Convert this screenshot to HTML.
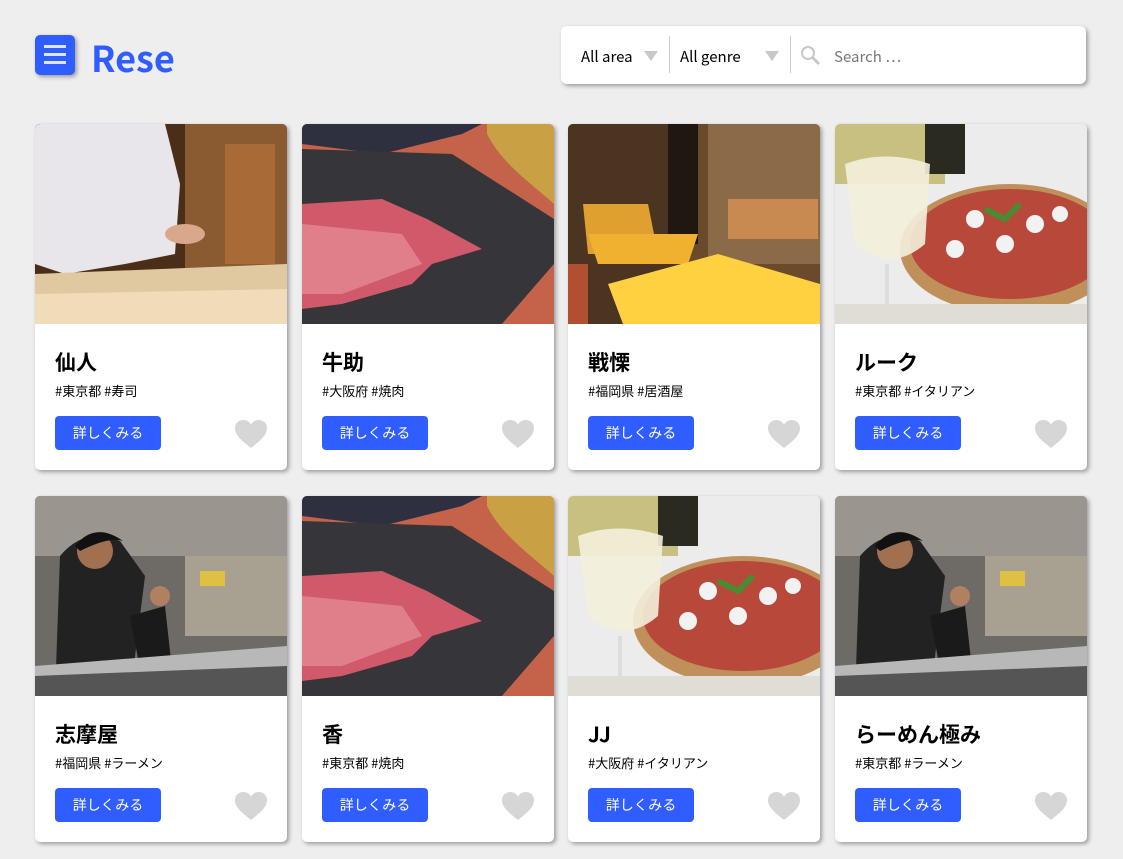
<!DOCTYPE html>
<html><head><meta charset="utf-8"><style>
*{margin:0;padding:0;box-sizing:border-box}
html,body{width:1123px;height:859px;overflow:hidden}
body{background:#eeeeee;font-family:"Liberation Sans","Noto Sans CJK JP",sans-serif;position:relative}
.menu{position:absolute;left:35px;top:35px;width:40px;height:40px;background:#305dff;border-radius:5px;box-shadow:2px 2px 4px rgba(0,0,0,.35)}
.menu i{position:absolute;left:9px;width:22px;height:3px;background:#dfe6ff}
.logo{position:absolute;left:91px;top:34px;font-size:36px;font-weight:bold;color:#305dff;font-family:"Noto Sans CJK JP","Liberation Sans",sans-serif;line-height:46px}
.search{position:absolute;left:561px;top:26px;width:525px;height:58px;background:#fff;border-radius:6px;box-shadow:2px 2px 4px rgba(0,0,0,.35);font-family:"Noto Sans CJK JP","Liberation Sans",sans-serif;font-size:15px}
.search span{position:absolute;top:20px;line-height:22px}
.tri{position:absolute;top:25px;width:0;height:0;border-left:7px solid transparent;border-right:7px solid transparent;border-top:10px solid #c8c8c8}
.sep{position:absolute;top:10px;width:1px;height:37px;background:#ccc}
.card{position:absolute;width:252px;height:346px;background:#fff;border-radius:5px;box-shadow:2px 2px 4px rgba(0,0,0,.35);overflow:hidden}
.card svg.im{display:block;width:252px;height:200px}
.card h2{position:absolute;left:20px;top:224px;font-size:21px;font-weight:bold;font-family:"Noto Sans CJK JP",sans-serif;line-height:28px;color:#000}
.card p{position:absolute;left:20px;top:258px;font-size:13px;font-family:"Noto Sans CJK JP",sans-serif;line-height:18px}
.card b{position:absolute;left:20px;top:292px;width:106px;height:34px;background:#305dff;border-radius:4px;color:#fff;font-weight:normal;font-size:14px;text-align:center;line-height:34px;font-family:"Noto Sans CJK JP",sans-serif}
.card svg.h{position:absolute;left:199px;top:295px;width:34px;height:30px}
</style></head><body>
<div class="menu"><i style="top:10px"></i><i style="top:18px"></i><i style="top:26px"></i></div>
<div class="logo">Rese</div>
<div class="search">
<span style="left:20px">All area</span><div class="tri" style="left:83px"></div>
<div class="sep" style="left:108px"></div>
<span style="left:119px">All genre</span><div class="tri" style="left:204px"></div>
<div class="sep" style="left:229px"></div>
<svg style="position:absolute;left:239px;top:19px" width="22" height="22" viewBox="0 0 22 22"><circle cx="8" cy="8" r="6" fill="none" stroke="#c8c8c8" stroke-width="2"/><path d="M12.5 12.5 L19 19" stroke="#c8c8c8" stroke-width="3"/></svg>
<span style="left:273px;color:#777">Search ⋯</span>
</div>
<script>
const imgs={
sushi:`<rect width="252" height="200" fill="#6b4222"/><rect x="150" width="102" height="150" fill="#8a5a30"/><rect x="190" y="20" width="50" height="120" fill="#a86a36"/><rect x="0" width="150" height="170" fill="#4a2e18"/><path d="M0 0H130L145 60 140 130 90 140 30 150 0 140Z" fill="#e8e6ea"/><path d="M0 150 L252 140 L252 200 L0 200Z" fill="#e0c9a0"/><path d="M0 170 L252 165 L252 200 L0 200Z" fill="#f0dcb8"/><ellipse cx="150" cy="110" rx="20" ry="10" fill="#d9a88a"/>`,
meat:`<rect width="252" height="200" fill="#c4624a"/><path d="M0 0H180L160 10 80 30 0 20Z" fill="#2e3040"/><path d="M185 0H252V80C230 60 200 40 185 10Z" fill="#c9a044"/><path d="M0 25L150 30 252 95 252 140 200 200 0 200Z" fill="#35353a"/><path d="M200 200 L252 140 L252 200Z" fill="#c4624a"/><path d="M0 80L80 75 125 95 180 125 130 140 110 160 40 180 0 185Z" fill="#d05a6a"/><path d="M0 100L100 110 120 140 40 170 0 170Z" fill="#e07f8a"/>`,
izakaya:`<rect width="252" height="200" fill="#6a4a2a"/><rect x="0" width="120" height="200" fill="#4b3420"/><rect x="100" width="30" height="120" fill="#201810"/><rect x="140" width="112" height="140" fill="#8b6a48"/><rect x="160" y="75" width="90" height="40" fill="#c88a50"/><path d="M15 80L80 80 90 130 20 130Z" fill="#e0a030"/><path d="M20 110L130 110 120 140 30 140Z" fill="#f0b030"/><path d="M40 160L150 130 252 160 252 200 55 200Z" fill="#ffd040"/><rect x="0" y="140" width="20" height="60" fill="#b05030"/>`,
pizza:`<rect width="252" height="200" fill="#ececec"/><rect x="0" width="110" height="60" fill="#c8c080"/><rect x="90" width="40" height="50" fill="#2a2a20"/><ellipse cx="175" cy="125" rx="110" ry="65" fill="#c0905a"/><ellipse cx="175" cy="120" rx="100" ry="55" fill="#b8483a"/><circle cx="140" cy="95" r="9" fill="#f2f2f2"/><circle cx="200" cy="100" r="9" fill="#f2f2f2"/><circle cx="170" cy="120" r="9" fill="#f2f2f2"/><circle cx="225" cy="90" r="8" fill="#f2f2f2"/><circle cx="120" cy="125" r="9" fill="#f2f2f2"/><path d="M150 85l20 10 15-15" stroke="#4a8a30" stroke-width="6" fill="none"/><path d="M10 40Q50 25 95 40L90 120Q55 150 20 120Z" fill="#f4f0dc" opacity=".9"/><rect x="50" y="140" width="4" height="60" fill="#ddd"/><rect x="0" y="180" width="252" height="20" fill="#e0dcd6"/>`,
ramen:`<rect width="252" height="200" fill="#6e6a66"/><rect x="0" width="252" height="60" fill="#9a958e"/><rect x="150" y="60" width="102" height="80" fill="#a8a090"/><rect x="165" y="75" width="25" height="15" fill="#e0c040"/><path d="M25 60Q50 30 85 45L110 80 95 200H20Z" fill="#222"/><circle cx="60" cy="55" r="18" fill="#a07050"/><path d="M40 50Q60 25 88 45 75 40 45 55Z" fill="#111"/><path d="M95 120L130 110 140 200 110 200Z" fill="#1a1a1a"/><circle cx="125" cy="100" r="10" fill="#b08060"/><path d="M0 170L252 150 252 200 0 200Z" fill="#b8b8b8"/><path d="M0 180L252 170 252 200 0 200Z" fill="#555"/>`};
const heart=`<svg class="h" viewBox="0 0 34 30"><path d="M17 29C7 21 1 16 1 9 1 4 5 1 9.5 1 13 1 15.5 3 17 5.5 18.5 3 21 1 24.5 1 29 1 33 4 33 9 33 16 27 21 17 29Z" fill="#d6d6d6"/></svg>`;
const data=[["仙人","#東京都 #寿司","sushi"],["牛助","#大阪府 #焼肉","meat"],["戦慄","#福岡県 #居酒屋","izakaya"],["ルーク","#東京都 #イタリアン","pizza"],["志摩屋","#福岡県 #ラーメン","ramen"],["香","#東京都 #焼肉","meat"],["JJ","#大阪府 #イタリアン","pizza"],["らーめん極み","#東京都 #ラーメン","ramen"]];
const xs=[35,302,568,835],ys=[124,496];
let h="";data.forEach((d,i)=>{h+=`<div class="card" style="left:${xs[i%4]}px;top:${ys[Math.floor(i/4)]}px"><svg class="im" viewBox="0 0 252 200" preserveAspectRatio="none">${imgs[d[2]]}</svg><h2>${d[0]}</h2><p>${d[1]}</p><b>詳しくみる</b>${heart}</div>`});
document.write(h);
</script>
</body></html>
